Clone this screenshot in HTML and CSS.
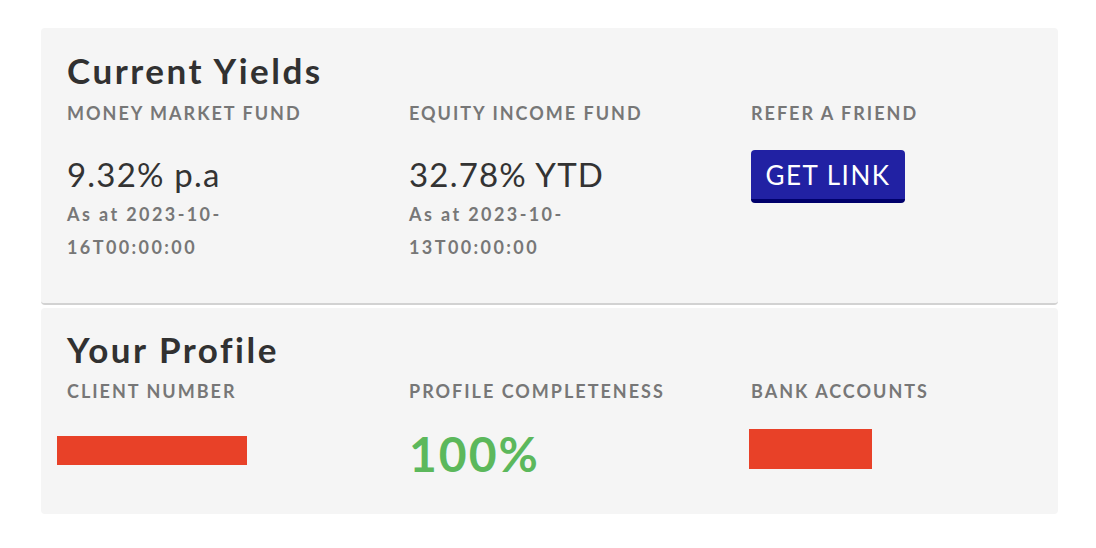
FILE: index.html
```html
<!DOCTYPE html>
<html>
<head>
<meta charset="utf-8">
<link rel="stylesheet" href="styles.css">
</head>
<body>
<div class="page">
  <section class="card card-yields">
    <h2 class="card-title">Current Yields</h2>
    <div class="cols">
      <div class="col">
        <div class="label">MONEY MARKET FUND</div>
        <div class="value">9.32% p.a</div>
        <div class="asat">As at 2023-10-<br>16T00:00:00</div>
      </div>
      <div class="col">
        <div class="label">EQUITY INCOME FUND</div>
        <div class="value">32.78% YTD</div>
        <div class="asat">As at 2023-10-<br>13T00:00:00</div>
      </div>
      <div class="col">
        <div class="label">REFER A FRIEND</div>
        <button class="btn">GET LINK</button>
      </div>
    </div>
  </section>
  <section class="card card-profile">
    <h2 class="card-title">Your Profile</h2>
    <div class="cols">
      <div class="col">
        <div class="label">CLIENT NUMBER</div>
        <div class="redact redact-client"></div>
      </div>
      <div class="col">
        <div class="label">PROFILE COMPLETENESS</div>
        <div class="complete">100%</div>
      </div>
      <div class="col">
        <div class="label">BANK ACCOUNTS</div>
        <div class="redact redact-bank"></div>
      </div>
    </div>
  </section>
</div>
</body>
</html>
```
FILE: styles.css
```css
* { box-sizing: border-box; }
html, body { margin: 0; padding: 0; background: #ffffff; }
body { font-family: "Lato", "Open Sans", sans-serif; color: #333333; }
.page {
  width: 1096px;
  padding: 28px 38px 0 41px;
  display: flex;
  flex-direction: column;
  gap: 3px;
}
.card {
  background: #f5f5f5;
  border-radius: 4px;
  padding: 22px 26px 0 26px;
}
.card-yields {
  height: 277px;
  border-bottom: 2px solid #d2d2d2;
}
.card-profile {
  height: 206px;
  padding-top: 21px;
}
.card-title {
  margin: 0;
  font-size: 35px;
  font-weight: 700;
  letter-spacing: 2.5px;
  line-height: 40px;
  color: #313131;
}
.cols {
  display: grid;
  grid-template-columns: 342px 342px 1fr;
  margin-top: 11px;
}
.card-profile .cols { margin-top: 10px; }
.label {
  font-size: 18px;
  font-weight: 700;
  letter-spacing: 2px;
  color: #777777;
  line-height: 24px;
  white-space: nowrap;
}
.value {
  font-size: 33px;
  font-weight: 400;
  color: #333333;
  line-height: 40px;
  margin-top: 29px;
  letter-spacing: 1.2px;
}
.asat {
  font-size: 18px;
  font-weight: 700;
  letter-spacing: 2.4px;
  color: #777777;
  line-height: 33px;
  margin-top: 4px;
}
.btn {
  display: block;
  margin-top: 25px;
  background: #2121a3;
  color: #ffffff;
  border: none;
  border-bottom: 4px solid #00006b;
  border-radius: 4px;
  font-family: inherit;
  font-size: 26px;
  font-weight: 400;
  letter-spacing: 1.5px;
  height: 53px;
  width: 154px;
  padding: 0;
  cursor: pointer;
}
.complete {
  margin-top: 27px;
  font-size: 48px;
  font-weight: 700;
  color: #5cb85c;
  line-height: 48px;
  letter-spacing: 2px;
}
.redact { background: #e84128; }
.redact-client {
  margin-top: 33px;
  margin-left: -10px;
  width: 190px;
  height: 29px;
}
.redact-bank {
  margin-top: 26px;
  margin-left: -2px;
  width: 123px;
  height: 40px;
}
```
